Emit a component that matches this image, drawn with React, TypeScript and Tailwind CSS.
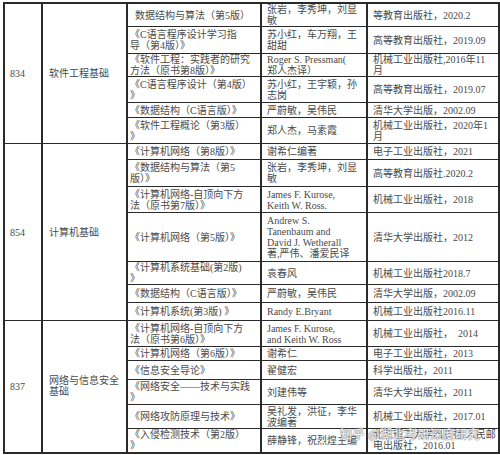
import React from "react";

type Row = { h: number; book: string[]; author: string[]; pub: string[]; bookPad?: string };
type Group = { code: string; subject: string[]; rows: Row[] };

const groups: Group[] = [
  {
    code: "834",
    subject: ["软件工程基础"],
    rows: [
      { h: 23, book: ["数据结构与算法（第5版）"], author: ["张岩，李秀坤，刘显", "敏"], pub: ["等教育出版社，2020.2"], bookPad: "pl-[7px]" },
      { h: 27, book: ["《C语言程序设计学习指", "导（第4版）》"], author: ["苏小红，车万翔，王", "甜甜"], pub: ["高等教育出版社，2019.09"] },
      { h: 23, book: ["《软件工程：实践者的研究", "方法（原书第8版）》"], author: ["Roger S. Pressman(", "郑人杰译）"], pub: ["机械工业出版社,2016年11", "月"] },
      { h: 26, book: ["《C语言程序设计（第4版）", "》"], author: ["苏小红，王宇颖，孙", "志岗"], pub: ["高等教育出版社，2019.07"] },
      { h: 15, book: ["《数据结构（C语言版）》"], author: ["严蔚敏，吴伟民"], pub: ["清华大学出版，2002.09"] },
      { h: 26, book: ["《软件工程概论（第3版）", "》"], author: ["郑人杰，马素霞"], pub: ["机械工业出版社，2020年1", "月"] },
    ],
  },
  {
    code: "854",
    subject: ["计算机基础"],
    rows: [
      { h: 16, book: ["《计算机网络（第8版）》"], author: ["谢希仁编著"], pub: ["电子工业出版社，2021"] },
      { h: 27, book: ["《数据结构与算法（第5", "版）》"], author: ["张岩，李秀坤，刘显", "敏"], pub: ["高等教育出版社.2020.2"] },
      { h: 26, book: ["《计算机网络-自顶向下方", "法（原书第7版）》"], author: ["James F. Kurose,", "Keith W. Ross."], pub: ["机械工业出版社，2018"] },
      { h: 49, book: ["《计算机网络（第5版）》"], author: ["Andrew S.", "Tanenbaum and", "David J. Wetherall", "著,严伟、潘爱民译"], pub: ["清华大学出版社，2012"] },
      { h: 22, book: ["《计算机系统基础(第2版)", "》"], author: ["袁春风"], pub: ["机械工业出版社2018.7"] },
      { h: 18, book: ["《数据结构（C语言版）》"], author: ["严蔚敏，吴伟民"], pub: ["清华大学出版，2002.09"] },
      { h: 18, book: ["《计算机系统(第3版) 》"], author: ["Randy E.Bryant"], pub: ["机械工业出版社2016.11"] },
    ],
  },
  {
    code: "837",
    subject: ["网络与信息安全", "基础"],
    rows: [
      { h: 26, book: ["《计算机网络-自顶向下方", "法（原书第6版）》"], author: ["James F. Kurose,", "and Keith W. Ross"], pub: ["机械工业出版社，  2014"] },
      { h: 14, book: ["《计算机网络（第6版）》"], author: ["谢希仁"], pub: ["电子工业出版社，2013"] },
      { h: 19, book: ["《信息安全导论》"], author: ["翟健宏"], pub: ["科学出版社，2011"] },
      { h: 25, book: ["《网络安全——技术与实践", "》"], author: ["刘建伟等"], pub: ["清华大学出版社，2011"] },
      { h: 24, book: ["《网络攻防原理与技术》"], author: ["吴礼发，洪征，李华", "波编著"], pub: ["机械工业出版社，2017.01"] },
      { h: 24, book: ["《入侵检测技术（第2版）", "》"], author: ["薛静锋，祝烈煌主编"], pub: ["北京理工大学出版社/人民邮", "电出版社，2016.01"] },
    ],
  },
];

function Lines({ lines }: { lines: string[] }) {
  return (
    <>
      {lines.map((l, i) => (
        <div key={i} className="whitespace-pre h-[11px] leading-[11px]">
          {l}
        </div>
      ))}
    </>
  );
}

const cell = "border border-[#2a2a2a] align-middle p-0 overflow-hidden";

export default function App() {
  return (
    <div
      className="relative w-[500px] h-[455px] bg-white overflow-hidden text-[#4a4a4a] text-[10px] leading-[11px]"
      style={{ fontFamily: '"Liberation Serif", "Noto Sans CJK SC", serif' }}
    >
      <table className="ml-[3px] mt-[2px] table-fixed border-collapse border-2 border-[#2a2a2a] w-[495px]">
        <colgroup>
          <col className="w-[38px]" />
          <col className="w-[85px]" />
          <col className="w-[134px]" />
          <col className="w-[106px]" />
          <col className="w-[132px]" />
        </colgroup>
        <tbody>
          {groups.map((g) =>
            g.rows.map((r, i) => (
              <tr key={g.code + i} style={{ height: r.h }}>
                {i === 0 && (
                  <>
                    <td rowSpan={g.rows.length} className={`${cell} border-r-2 pl-[5px]`}>
                      <Lines lines={[g.code]} />
                    </td>
                    <td rowSpan={g.rows.length} className={`${cell} border-r-2 pl-[6px]`}>
                      <Lines lines={g.subject} />
                    </td>
                  </>
                )}
                <td className={`${cell} border-r-2 ${r.bookPad ?? "pl-[2px]"}`}>
                  <Lines lines={r.book} />
                </td>
                <td className={`${cell} border-r-2 pl-[5px]`}>
                  <Lines lines={r.author} />
                </td>
                <td className={`${cell} pl-[5px]`}>
                  <Lines lines={r.pub} />
                </td>
              </tr>
            ))
          )}
        </tbody>
      </table>
      <div
        className="absolute left-[340px] top-[427px] whitespace-nowrap text-[12px] leading-[14px] text-white/90 tracking-[0.5px]"
        style={{
          fontFamily: '"Noto Sans CJK SC", sans-serif',
          textShadow: "0 0 1px #888, 0 0 1px #888, 0 0 2px #999",
        }}
      >
        知乎 @湖北考研深度研究
      </div>
    </div>
  );
}
